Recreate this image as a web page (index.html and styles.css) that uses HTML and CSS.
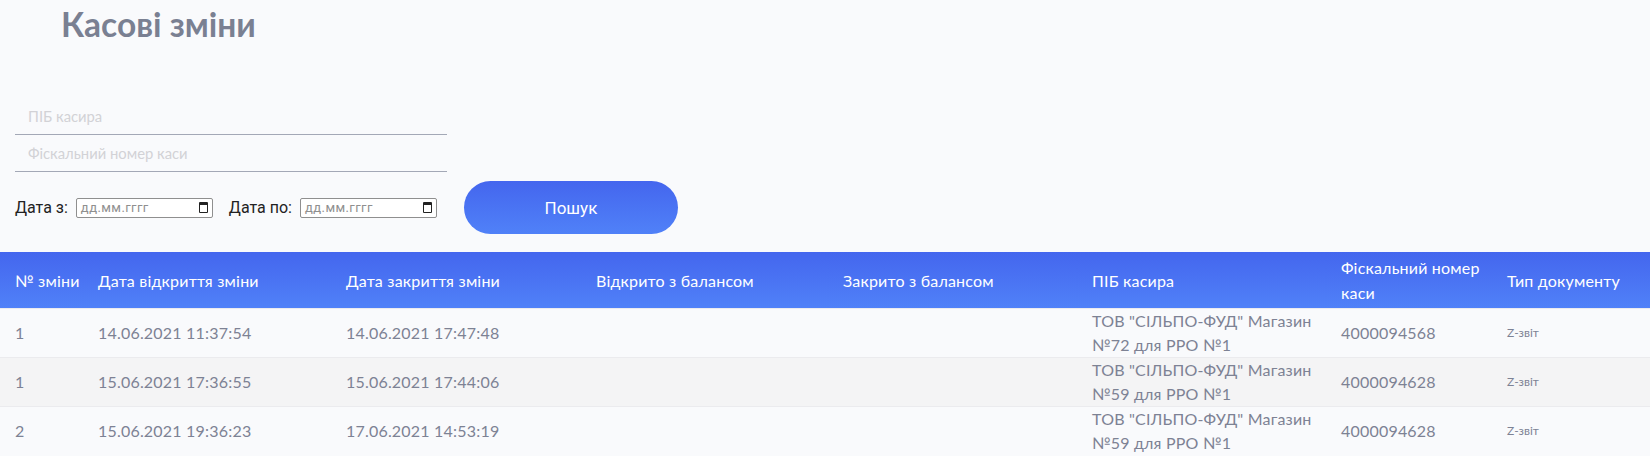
FILE: index.html
```html
<!DOCTYPE html>
<html lang="uk">
<head>
    <meta charset="UTF-8">
    <meta name="viewport" content="width=device-width, initial-scale=1.0">
    <title>Касові зміни</title>
    <link rel="stylesheet" href="styles.css">
</head>
<body>
    <h1 class="page-title">Касові зміни</h1>

    <form class="filters">
        <input class="text-field" type="text" placeholder="ПІБ касира">
        <input class="text-field" type="text" placeholder="Фіскальний номер каси">

        <div class="date-row">
            <label class="date-label">Дата з:</label>
            <div class="date-input date-from"><span>дд.мм.гггг</span><i class="cal"></i></div>
            <label class="date-label">Дата по:</label>
            <div class="date-input date-to"><span>дд.мм.гггг</span><i class="cal"></i></div>
            <button class="search-btn" type="button">Пошук</button>
        </div>
    </form>

    <table class="shifts">
        <thead>
            <tr>
                <th class="c-num">№ зміни</th>
                <th class="c-open">Дата відкриття зміни</th>
                <th class="c-close">Дата закриття зміни</th>
                <th class="c-obal">Відкрито з балансом</th>
                <th class="c-cbal">Закрито з балансом</th>
                <th class="c-name">ПІБ касира</th>
                <th class="c-fisc">Фіскальний номер каси</th>
                <th class="c-type">Тип документу</th>
            </tr>
        </thead>
        <tbody>
            <tr>
                <td>1</td>
                <td>14.06.2021 11:37:54</td>
                <td>14.06.2021 17:47:48</td>
                <td></td>
                <td></td>
                <td>ТОВ "СІЛЬПО-ФУД" Магазин №72 для РРО №1</td>
                <td>4000094568</td>
                <td class="doc-type">Z-звіт</td>
            </tr>
            <tr>
                <td>1</td>
                <td>15.06.2021 17:36:55</td>
                <td>15.06.2021 17:44:06</td>
                <td></td>
                <td></td>
                <td>ТОВ "СІЛЬПО-ФУД" Магазин №59 для РРО №1</td>
                <td>4000094628</td>
                <td class="doc-type">Z-звіт</td>
            </tr>
            <tr>
                <td>2</td>
                <td>15.06.2021 19:36:23</td>
                <td>17.06.2021 14:53:19</td>
                <td></td>
                <td></td>
                <td>ТОВ "СІЛЬПО-ФУД" Магазин №59 для РРО №1</td>
                <td>4000094628</td>
                <td class="doc-type">Z-звіт</td>
            </tr>
        </tbody>
    </table>
</body>
</html>
```

FILE: styles.css
```css
body {
    margin: 0;
    padding: 0;
    background: #f9fafc;
    font-family: 'Lato', 'Open Sans', sans-serif;
    color: #7b8092;
}
.page-title {
    margin: 0;
    padding: 4px 0 0 61px;
    font-size: 33.5px;
    line-height: 40px;
    font-weight: 700;
    color: #7a8092;
}
.filters {
    padding: 54px 0 0 15px;
}
.text-field {
    display: block;
    width: 432px;
    height: 37px;
    box-sizing: border-box;
    padding: 0 13px;
    border: none;
    border-bottom: 1px solid #a3a8b6;
    background: transparent;
    font-family: 'Lato', sans-serif;
    font-size: 14.8px;
    outline: none;
}
.text-field::placeholder {
    color: #d2d2d6;
}
.date-row {
    display: flex;
    align-items: center;
    margin-top: 9px;
}
.date-label {
    font-family: 'Roboto', sans-serif;
    font-size: 16px;
    color: #222;
    margin-right: 8px;
}
.date-input {
    display: flex;
    align-items: center;
    justify-content: space-between;
    width: 137px;
    height: 20px;
    box-sizing: border-box;
    padding: 0 4px 0 4px;
    border: 1px solid #8f8f8f;
    border-radius: 2px;
    background: #fff;
    font-family: 'Roboto', sans-serif;
    font-size: 13px;
    letter-spacing: 0.4px;
    color: #8f8f8f;
}
.date-from {
    margin-right: 16px;
}
.date-to {
    margin-right: 27px;
}
.cal {
    width: 7px;
    height: 7px;
    border: 1.5px solid #222;
    border-top-width: 3px;
    border-radius: 1px;
}
.search-btn {
    width: 214px;
    height: 53px;
    border: none;
    border-radius: 27px;
    background: linear-gradient(180deg, #4466ee 0%, #5081f8 100%);
    color: #fff;
    font-family: 'Roboto', sans-serif;
    font-size: 17px;
    cursor: pointer;
}
.shifts {
    width: 100%;
    margin-top: 18px;
    border-collapse: collapse;
    table-layout: fixed;
    font-size: 16px;
    letter-spacing: 0.2px;
}
.shifts th {
    height: 56px;
    padding: 0 4px 0 15px;
    background: linear-gradient(180deg, #4466ee 0%, #5081f8 100%);
    color: #fff;
    font-weight: 400;
    text-align: left;
    line-height: 25px;
}
.shifts td {
    height: 48px;
    padding: 0 4px 0 15px;
    border-top: 1px solid #ebebee;
    line-height: 24px;
    color: #7d8294;
}
.shifts tbody tr:nth-child(even) td {
    background: #f4f4f5;
}
.shifts td.doc-type {
    font-size: 12px;
    letter-spacing: 0;
}
.shifts th.c-num {
    white-space: nowrap;
    padding-right: 0;
}
.c-num { width: 68px; }
.c-open { width: 229px; }
.c-close { width: 231px; }
.c-obal { width: 228px; }
.c-cbal { width: 230px; }
.c-name { width: 230px; }
.c-fisc { width: 147px; }
```
